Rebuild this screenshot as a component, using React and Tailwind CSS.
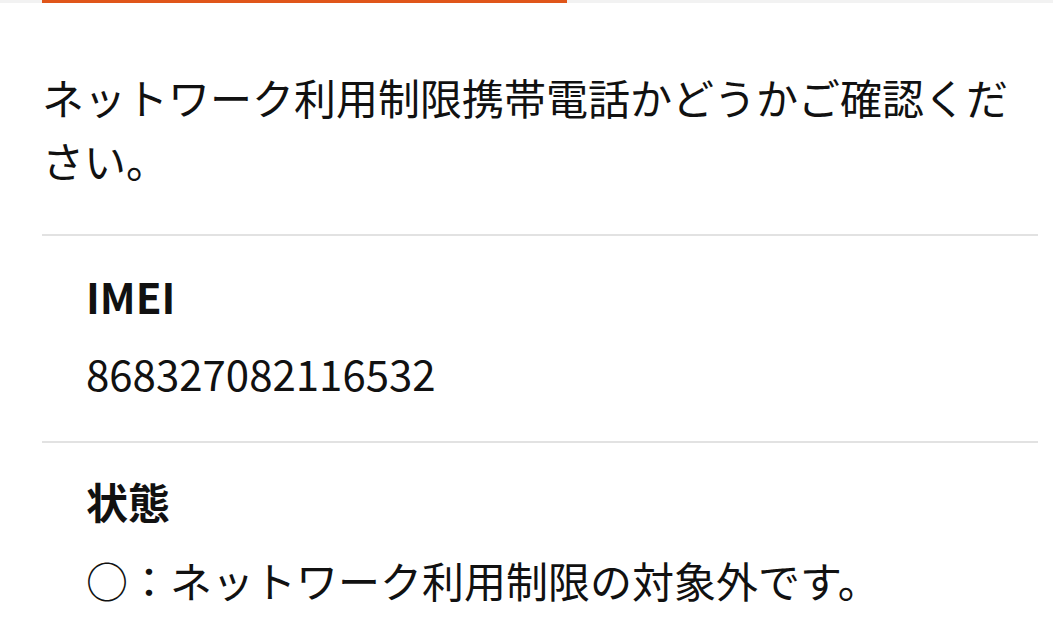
export default function App() {
  return (
    <div
      className="min-h-screen bg-white text-[#111]"
      style={{ fontFamily: '"Noto Sans CJK JP", "Noto Sans", sans-serif' }}
    >
      <div className="h-[3px] bg-[#f2f2f2] pl-[42px]">
        <div className="h-[3px] w-[525px] bg-[#e0561a]" />
      </div>

      <div className="pl-[42px] pr-[15px]">
        <p className="pt-[62px] pb-[43px] text-[42px] leading-[63px]">
          ネットワーク利用制限携帯電話かどうかご確認ください。
        </p>

        <dl className="border-t-2 border-[#e2e2e2]">
          <div className="pl-[44px] pt-[28px] pb-[37px]">
            <dt className="text-[42px] font-bold leading-[63px]">IMEI</dt>
            <dd className="mt-[14px] text-[42px] leading-[63px]">868327082116532</dd>
          </div>
          <div className="border-t-2 border-[#e2e2e2] pl-[44px] pt-[26px]">
            <dt className="text-[42px] font-bold leading-[63px]">状態</dt>
            <dd className="mt-[16px] text-[42px] leading-[63px]">○：ネットワーク利用制限の対象外です。</dd>
          </div>
        </dl>
      </div>
    </div>
  );
}
